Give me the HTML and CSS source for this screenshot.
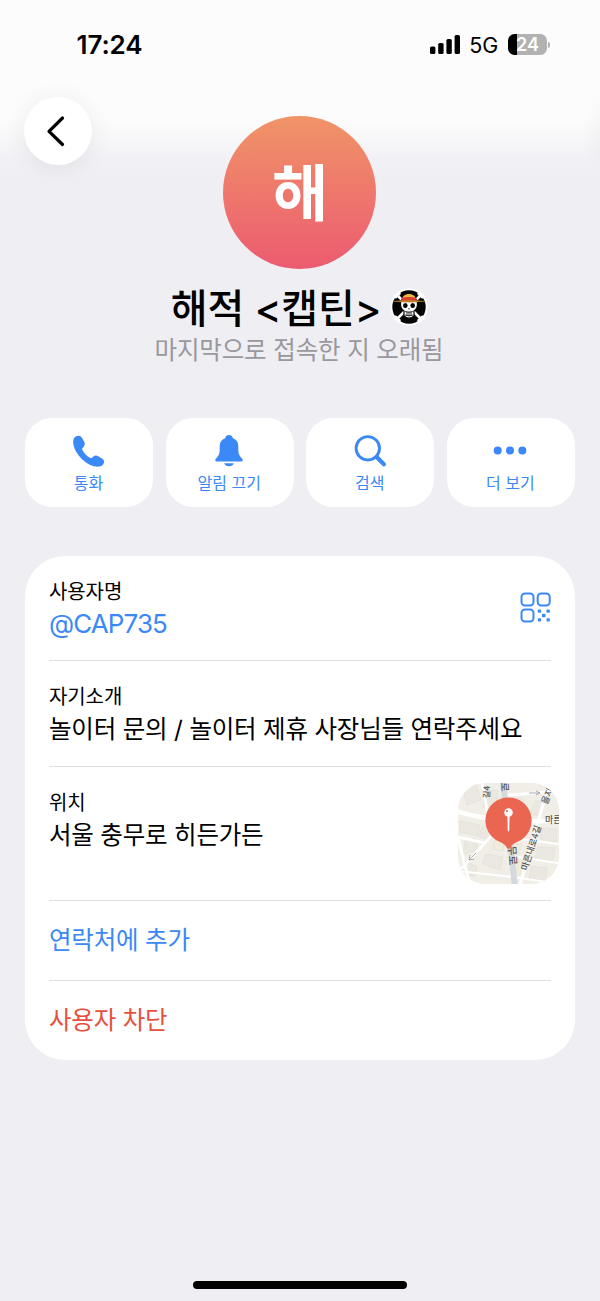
FILE: index.html
```html
<!DOCTYPE html>
<html lang="ko">
<head>
<meta charset="utf-8">
<meta name="viewport" content="width=device-width, initial-scale=1">
<title>해적 &lt;캡틴&gt;</title>
<link rel="stylesheet" href="styles.css">
</head>
<body>
<div class="screen">
  <header class="status">
    <span class="time">17:24</span>
    <div class="indicators">
      <svg class="signal" viewBox="0 0 30 19" width="30" height="19">
        <rect x="0" y="11.5" width="5.4" height="7.5" rx="1.6"/>
        <rect x="8.2" y="8" width="5.4" height="11" rx="1.6"/>
        <rect x="16.4" y="4" width="5.4" height="15" rx="1.6"/>
        <rect x="24.6" y="0" width="5.4" height="19" rx="1.6"/>
      </svg>
      <span class="network">5G</span>
      <div class="battery"><span>24</span></div>
      <i class="battery-tip"></i>
    </div>
  </header>

  <div class="nav">
    <button class="back" aria-label="뒤로">
      <svg viewBox="0 0 20 32" width="20" height="32"><path d="M16.500 3 3 16.300 16.500 29.500"/></svg>
    </button>
    <i class="nav-edge"></i>
  </div>

  <section class="profile">
    <div class="avatar"><span>해</span></div>
    <h1 class="name"><span class="name-text">해적 <span class="bracket">&lt;</span>캡틴<span class="bracket">&gt;</span></span>
      <svg class="emblem" viewBox="0 0 40 40" width="40" height="40">
        <circle cx="20" cy="20" r="18.6" fill="#fff"/>
        <circle cx="20" cy="20" r="16.7" fill="#050505"/>
        <path d="M8 8 32 32M32 8 8 32" stroke="#fff" stroke-width="2.600"/>
        <g fill="#fff">
          <circle cx="6.500" cy="9.300" r="2.200"/><circle cx="9.500" cy="6.500" r="2.200"/>
          <circle cx="33.500" cy="9.300" r="2.200"/><circle cx="30.500" cy="6.500" r="2.200"/>
          <circle cx="6.500" cy="30.700" r="2.200"/><circle cx="9.500" cy="33.500" r="2.200"/>
          <circle cx="33.500" cy="30.700" r="2.200"/><circle cx="30.500" cy="33.500" r="2.200"/>
        </g>
        <path d="M11.500 17c0-5 3.500-8 8.500-8s8.500 3 8.500 8c0 3.500-1 5.500-3.500 7v5q-5 4.500-10 0v-5C12.500 22.500 11.500 20.500 11.500 17Z" fill="#fff" stroke="#050505" stroke-width="1.200"/>
        <ellipse cx="16.300" cy="18.500" rx="2.300" ry="2.500"/>
        <ellipse cx="23.700" cy="18.500" rx="2.300" ry="2.500"/>
        <path d="M19.200 21.800h1.600M15.500 24.500q4.500 1.500 9 0M16 28q4 1.500 8 0M18 24.500v4.500M20 24.500v5M22 24.500v4.500" stroke="#222" stroke-width=".9" fill="none"/>
        <path d="M13.500 11.500C14 5.500 26 5.500 26.500 11.500Z" fill="#edb73d"/>
        <path d="M12.500 11Q20 9 27.500 11V14H12.500Z" fill="#dd3b2c"/>
        <path d="M4.500 14.300Q20 12.500 35.500 14.300 20 16 4.500 14.300Z" fill="#b8842f" stroke="#b8842f" stroke-width=".5"/>
      </svg>
    </h1>
    <p class="seen">마지막으로 접속한 지 오래됨</p>
  </section>

  <nav class="actions">
    <button class="action">
      <svg viewBox="0 0 36 36" width="36" height="36"><path d="M3 5.300C4 3.400 6.400 2.300 8.700 2.900c1.300.3 2 1.400 2.700 2.600l1.700 3c1 1.900.9 3.500-.2 5-1 1.300-2.300 2-1.700 3.200 1.900 3.700 4.600 6.500 8.200 8.300 1.200.6 1.900-.7 3.300-1.700 1.400-1 3.200-.9 4.900.1l3.100 1.900c1.800 1.100 2.700 2.600 2.300 4.100-.5 2.200-2.500 3.900-4.900 4.200-5 .6-11-1.700-16.500-6.900C6.300 21.700 2.900 15.900 2.300 10.500 2.100 8.500 2.200 6.800 3 5.300Z"/></svg>
      <span>통화</span>
    </button>
    <button class="action">
      <svg viewBox="0 0 36 36" width="36" height="36"><path d="M18 2.100c-2 0-3.300 1.100-3.900 3.100-3.700 1.400-5.400 4.100-5.400 8v3.600c0 4-1.100 6.300-3.800 8.900-1 1-.9 2.800.9 2.800h24.400c1.800 0 1.900-1.800.9-2.800-2.700-2.600-3.800-4.900-3.800-8.900v-3.600c0-3.900-1.700-6.600-5.400-8-.6-2-1.900-3.100-3.900-3.100ZM13.200 30.300h9.600c-.6 1.800-2.400 3-4.800 3s-4.200-1.200-4.800-3Z"/></svg>
      <span>알림 끄기</span>
    </button>
    <button class="action">
      <svg class="line" viewBox="0 0 36 36" width="36" height="36"><circle cx="15.800" cy="15.300" r="11.700" stroke-width="2.900"/><path d="m24.600 24 7.300 7.300" stroke-width="4.200"/></svg>
      <span>검색</span>
    </button>
    <button class="action">
      <svg viewBox="0 0 36 36" width="36" height="36"><circle cx="5.700" cy="17.500" r="4"/><circle cx="18" cy="17.500" r="4"/><circle cx="30.300" cy="17.500" r="4"/></svg>
      <span>더 보기</span>
    </button>
  </nav>

  <main class="card">
    <div class="row username">
      <div>
        <div class="label">사용자명</div>
        <div class="value handle">@CAP735</div>
      </div>
      <svg class="qr" viewBox="0 0 31 31" width="31" height="31">
        <g fill="none" stroke="#3b88f7" stroke-width="2">
          <rect x="1.500" y="1.500" width="12" height="12" rx="3.500"/>
          <rect x="17.700" y="1.500" width="12" height="12" rx="3.500"/>
          <rect x="1.500" y="17.500" width="12" height="12" rx="3.500"/>
        </g>
        <g fill="#3b88f7">
          <rect x="17.800" y="17.500" width="3.300" height="3.300" rx=".8"/><rect x="26.500" y="17.500" width="3.300" height="3.300" rx=".8"/>
          <rect x="22" y="21.800" width="3.500" height="3.500" rx=".8"/>
          <rect x="17.800" y="26.200" width="3.300" height="3.300" rx=".8"/><rect x="26.500" y="26.200" width="3.300" height="3.300" rx=".8"/>
        </g>
      </svg>
    </div>
    <div class="row bio">
      <div class="label">자기소개</div>
      <div class="value">놀이터 문의 / 놀이터 제휴 사장님들 연락주세요</div>
    </div>
    <div class="row place">
      <div>
        <div class="label">위치</div>
        <div class="value">서울 충무로 히든가든</div>
      </div>
      <svg class="map" viewBox="0 0 101 101" width="101" height="101">
        <rect width="102" height="102" fill="#f1eee8"/>
        <g fill="#ebe8e2" stroke="#e0ddd6" stroke-width=".6">
          <path d="M5 5 18 1 23 17 9 22ZM2 38 22 42 20 53 2 49ZM24 44 38 45 33 57 21 54ZM7 58 17 55 20 67 5 71ZM28 6 40 8 37 29 25 24ZM51 15 64 15 70 27 53 28ZM77 18 86 19 82 33 72 31ZM85 45 99 46 98 59 82 56ZM80 64 97 65 95 78 77 76ZM28 71 45 74 42 87 24 81ZM7 78 19 84 17 93 2 91ZM74 83 89 85 87 98 71 95Z"/>
          <path d="M55 61 64 61 61 71 53 71ZM37 57 46 59 45 68 34 66ZM61 78 68 79 65 92 58 91Z" fill="#f1edda"/>
        </g>
        <g fill="none" stroke="#fff">
          <path d="M-2 28Q42 42 104 37" stroke-width="4.500"/>
          <path d="M24-1 31 38M49 12 104 8M91 0 62 102M36 50 3 86V102M0 54 12 102M0 54 27 60" stroke-width="3"/>
          <path d="M0 88 55 94 103 101M53 55 101 61M60 74 100 80" stroke-width="2"/>
        </g>
        <path d="M45-2 57 104" stroke="#d5d8dc" stroke-width="6"/>
        <g fill="none" stroke="#aaa" stroke-width="1"><path d="M71 10h11m-4-2 4 2-4 2M18 70 11 77m5-1-5 1 1-5"/></g>
        <g class="map-label">
          <text transform="translate(31.500 15.500) rotate(-88)" font-size="8.500">길4</text>
          <text transform="translate(43 -.5) rotate(88)" font-size="10">로</text>
          <text transform="translate(89 22) rotate(-67)" font-size="9">을지</text>
          <text x="87" y="40" font-size="9">마른</text>
          <text transform="translate(50 63) rotate(86)" font-size="10.500">무로</text>
          <text transform="translate(69 88) rotate(-72)" font-size="9">마른내로4길</text>
        </g>
        <path d="M50.500 14.500a23 23 0 0 1 9.500 44c-4 2-6.200 3-8 6.500q-1.500 2-3 0c-1.800-3.500-4-4.500-8-6.500a23 23 0 0 1 9.500-44Z" fill="#eb6650"/>
        <path d="M49.400 30h2.200l-.3 17-.8 2-.8-2Z" fill="#fff"/><circle cx="50.500" cy="29.500" r="4.300" fill="#fff"/><circle cx="49" cy="28" r="1" fill="#eb6650"/>
      </svg>
    </div>
    <div class="row link add">연락처에 추가</div>
    <div class="row link block">사용자 차단</div>
  </main>

  <div class="home-bar"></div>
</div>
</body>
</html>
```

FILE: styles.css
```css
* { box-sizing: border-box; }
body {
  margin: 0;
  background: #efeef3;
  font-family: Inter, "Noto Sans CJK KR", sans-serif;
  color: #000;
}
svg { display: block; flex: none; }
button { border: 0; padding: 0; font: inherit; }

.screen {
  height: 1301px;
  overflow: hidden;
  display: flex;
  flex-direction: column;
  background: linear-gradient(#fcfcfc 0, #fcfcfc 118px, #f7f7f9 140px, #f1f0f5 160px, #efeef3 185px);
}

.status {
  height: 97px;
  padding: 30px 50px 0 76.500px;
  display: flex;
  align-items: flex-start;
  justify-content: space-between;
}
.time { font-size: 26px; line-height: 30px; font-weight: 600; letter-spacing: -.1px; }
.indicators { display: flex; align-items: center; height: 29px; }
.network { margin-left: 9px; font-size: 21.500px; letter-spacing: -.2px; }
.battery {
  width: 39px;
  height: 21px;
  margin-left: 10px;
  border-radius: 6.500px;
  background: linear-gradient(90deg, #000 0 9.500px, #b2b2b2 9.500px);
  color: #fff;
  font-size: 18px;
  font-weight: 600;
  line-height: 21px;
  text-align: center;
}
.battery-tip { width: 2px; height: 6px; margin-left: 1px; background: #b2b2b2; border-radius: 0 3px 3px 0; }

.nav { height: 19px; padding: 0 0 0 24px; display: flex; justify-content: space-between; }
.back {
  width: 68px;
  height: 68px;
  flex: none;
  border-radius: 50%;
  background: #fff;
  box-shadow: 0 3px 26px rgba(0, 0, 0, .07);
  display: flex;
  align-items: center;
  justify-content: center;
}
.back svg { margin-right: 4px; fill: none; stroke: #000; stroke-width: 3.200; stroke-linecap: round; stroke-linejoin: round; }
.nav-edge { width: 68px; height: 68px; flex: none; margin-right: -69px; border-radius: 50%; box-shadow: 0 3px 26px rgba(0, 0, 0, .07); }

.profile { display: flex; flex-direction: column; align-items: center; }
.avatar {
  width: 153px;
  height: 153px;
  margin-right: 2px;
  padding: 3px 0 0 2px;
  border-radius: 50%;
  background: linear-gradient(#f09468, #ec5b70);
  display: flex;
  align-items: center;
  justify-content: center;
  color: #fff;
  font-size: 61px;
  font-weight: 700;
  line-height: 1;
}
.name {
  margin: 8px 0 0;
  height: 60px;
  display: flex;
  align-items: center;
  gap: 8px;
  font-size: 40px;
  font-weight: 500;
  line-height: 60px;
}
.name-text { padding-top: 3px; letter-spacing: -.1px; }
.bracket { font-weight: 500; }
.seen { margin: 0 2px 0 0; height: 26px; line-height: 27px; font-size: 24.500px; letter-spacing: -.15px; color: #99989d; white-space: nowrap; }

.actions { margin: 55.400px 25px 0; display: grid; grid-template-columns: repeat(4, 1fr); gap: 12.500px; }
.action {
  height: 88.300px;
  padding: 15px 1px 0 0;
  border-radius: 27px;
  background: #fff;
  color: #3b88f7;
  display: flex;
  flex-direction: column;
  align-items: center;
  font-size: 16px;
  line-height: 24px;
  gap: 2px;
}
.action svg { fill: #3b88f7; }
.action .line { fill: none; stroke: #3b88f7; stroke-linecap: round; }

.card { margin: 49.300px 25px 0; height: 504px; padding: 0 24px; border-radius: 40px; background: #fff; }
.row + .row { border-top: 1px solid #dfdfe1; }
.username { height: 104px; padding-top: 21px; display: flex; justify-content: space-between; }
.qr { margin-top: 15px; }
.bio { height: 106px; padding-top: 21px; }
.label { height: 33px; line-height: 30px; font-size: 20px; letter-spacing: -.1px; }
.value { height: 34px; line-height: 28px; font-size: 24.500px; letter-spacing: -.2px; white-space: nowrap; }
.handle { color: #3b88f7; font-size: 26px; letter-spacing: -.9px; }
.place { height: 134px; padding-top: 16px; display: flex; justify-content: space-between; }
.place .label { margin-top: 5px; }
.map { margin-right: -8px; border-radius: 27px; }
.map-label { fill: #555; font-family: "Noto Sans CJK KR", sans-serif; font-weight: 500; }
.link { height: 80px; line-height: 79px; font-size: 24.500px; letter-spacing: -.2px; }
.add { color: #3b88f7; }
.block { color: #e7503f; }

.home-bar { width: 214px; height: 8px; margin: auto auto 12px; border-radius: 4px; background: #000; }
```
